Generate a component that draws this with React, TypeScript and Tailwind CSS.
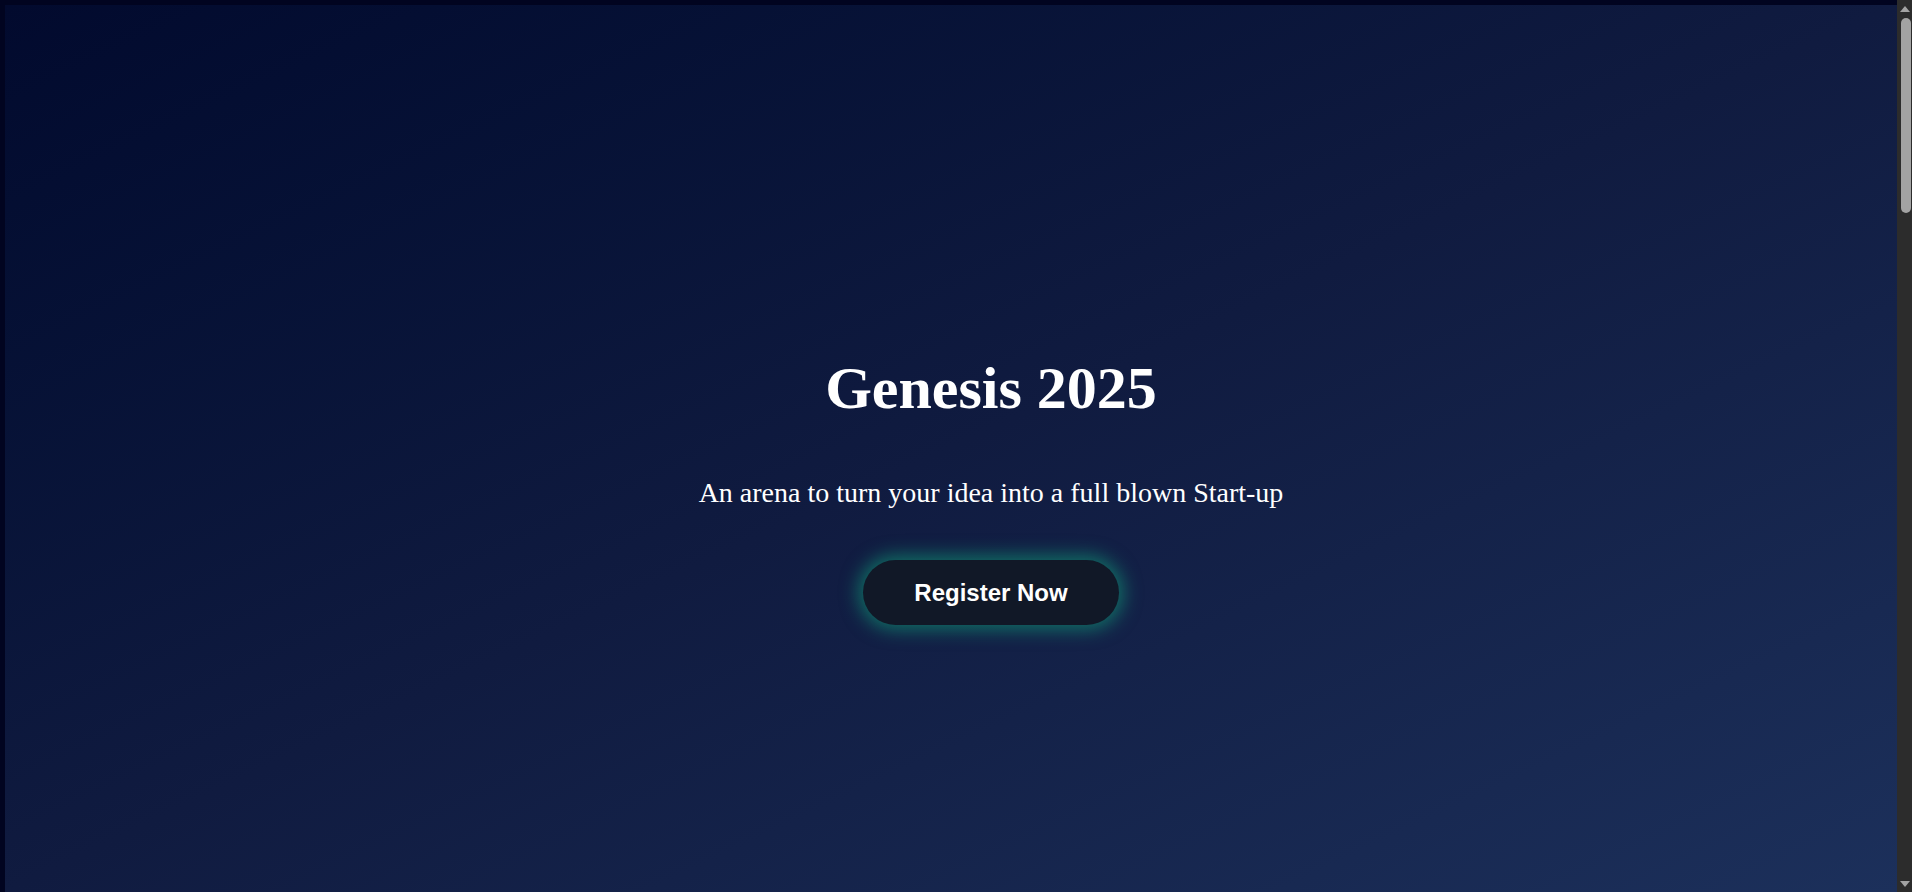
export default function App() {
  return (
    <div className="flex h-screen w-full overflow-hidden bg-[#010420]">
      <div className="min-w-0 flex-1 pl-[5px] pt-[5px]">
        {/* Hero — fills the first screen, gradient top-left dark to bottom-right navy */}
        <section className="flex h-[887px] flex-col items-center bg-gradient-to-br from-[#020a2e] via-[#101b40] to-[#1c305b] pl-[80px] pt-[353px] text-white">
          <h1 className="font-['Liberation_Serif',serif] text-[60px] font-bold leading-none">
            Genesis 2025
          </h1>
          <p className="mt-[61px] font-['Liberation_Serif',serif] text-[28px] leading-none">
            An arena to turn your idea into a full blown Start-up
          </p>
          <button
            type="button"
            className="mt-[53px] flex h-[65px] items-center rounded-full bg-[#111827] px-[51px] font-['Liberation_Sans',Arial,sans-serif] text-[24px] font-bold text-white shadow-[0_0_18px_5px_rgba(16,185,129,0.5)]"
          >
            Register Now
          </button>
        </section>
      </div>

      {/* Window scrollbar as seen in the capture */}
      <div aria-hidden="true" className="flex w-[15px] shrink-0 flex-col items-center bg-[#2c2c2c]">
        <div className="flex h-[17px] items-center justify-center">
          <span className="h-0 w-0 border-x-[5px] border-b-[6px] border-x-transparent border-b-[#a3a3a3]" />
        </div>
        <div className="ml-[2px] mt-[1px] h-[195px] w-[10px] rounded-full bg-[#a3a3a3]" />
        <div className="flex-1" />
        <div className="flex h-[17px] items-center justify-center">
          <span className="h-0 w-0 border-x-[5px] border-t-[6px] border-x-transparent border-t-[#a3a3a3]" />
        </div>
      </div>
    </div>
  );
}
